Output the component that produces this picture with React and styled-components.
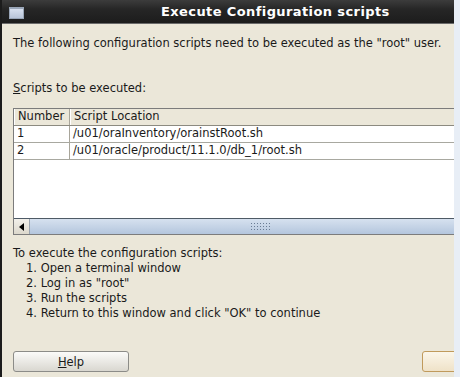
import React from 'react';
import styled, { createGlobalStyle } from 'styled-components';

const GlobalStyle = createGlobalStyle`
  html, body {
    margin: 0;
    padding: 0;
    background: #e8eef6;
  }
  body {
    font-family: "DejaVu Sans", "Liberation Sans", sans-serif;
    font-size: 11.5px;
    color: #1a1a1a;
  }
`;

const Window = styled.div`
  width: 452px;
  height: 377px;
  border-left: 2px solid #1c1c1c;
  background: #ebe7d9;
  overflow: hidden;
  display: flex;
  flex-direction: column;
`;

const TitleBar = styled.div`
  height: 23px;
  background: linear-gradient(#3c3c3c, #262626 40%, #1c1c1c);
  border-bottom: 1px solid #6a6a6a;
  display: flex;
  align-items: center;
  padding-left: 7px;
`;

const TitleIcon = styled.div`
  width: 13px;
  height: 9px;
  margin-top: 3px;
  border: 1px solid #9aa6b8;
  border-top-width: 2px;
  background: linear-gradient(#d8e0ee, #b8c4d8);
`;

const Title = styled.div`
  padding-left: 137px;
  color: #fff;
  font-weight: bold;
  font-size: 13px;
  letter-spacing: 0.4px;
  white-space: nowrap;
`;

const Body = styled.div`
  flex: 1;
  display: flex;
  flex-direction: column;
  padding: 12px 0 0 11px;
`;

const Line = styled.div`
  height: 15px;
  line-height: 15px;
  white-space: nowrap;
`;

const Label = styled(Line)`
  margin-top: 30px;
`;

const Table = styled.div`
  margin-top: 12px;
  width: 460px;
  height: 125px;
  border: 1px solid #7c7c7c;
  background: #fff;
  display: flex;
  flex-direction: column;
`;

const Row = styled.div`
  display: grid;
  grid-template-columns: 56px 1fr;
  height: 16px;
  line-height: 15px;
  background: ${p => (p.$header ? '#ebe7d9' : '#fff')};
  border-bottom: 1px solid ${p => (p.$header ? '#8c8a80' : '#a8a8a0')};
`;

const Cell = styled.div`
  padding-left: 3px;
  white-space: nowrap;
  border-right: ${p => (p.$sep ? '1px solid #a8a59a' : 'none')};
  border-left: ${p => (p.$hl ? '1px solid #fff' : 'none')};
`;

const Filler = styled.div`
  flex: 1;
`;

const ScrollBar = styled.div`
  height: 15px;
  display: flex;
  border-top: 1px solid #4e5a66;
  background: linear-gradient(#d6e1ef, #b4c6dd);
  position: relative;
`;

const ArrowButton = styled.div`
  width: 15px;
  background: linear-gradient(#f2f0ea, #dcd8cc);
  border-right: 1px solid #9aa4b0;
  display: flex;
  align-items: center;
  justify-content: center;
`;

const Grip = styled.div`
  position: absolute;
  left: 236px;
  top: 3px;
  width: 22px;
  height: 10px;
  background-image: radial-gradient(circle, #6a7c94 0.8px, transparent 1px);
  background-size: 3px 3px;
`;

const Instructions = styled.div`
  margin-top: 11px;
`;

const Step = styled(Line)`
  padding-left: 13px;
`;

const Footer = styled.div`
  margin-top: auto;
  margin-bottom: 5px;
  display: flex;
  justify-content: space-between;
`;

const Button = styled.div`
  width: ${p => p.$w}px;
  height: 19px;
  border: 1px solid ${p => (p.$default ? '#c09a5c' : '#8c8c88')};
  border-radius: 3px;
  background: ${p => (p.$default ? 'linear-gradient(#fbf6ea, #efe2c8)' : 'linear-gradient(#fbfbf9, #d9d7d0)')};
  display: flex;
  align-items: center;
  justify-content: center;
  margin-right: ${p => (p.$default ? '-20px' : '0')};
`;

const U = styled.span`
  text-decoration: underline;
`;

export default function App() {
  return (
    <>
      <GlobalStyle />
      <Window>
        <TitleBar>
          <TitleIcon />
          <Title>Execute Configuration scripts</Title>
        </TitleBar>
        <Body>
          <Line>The following configuration scripts need to be executed as the "root" user.</Line>
          <Label><U>S</U>cripts to be executed:</Label>
          <Table>
            <Row $header>
              <Cell $sep $hl>Number</Cell>
              <Cell $hl>Script Location</Cell>
            </Row>
            <Row>
              <Cell $sep>1</Cell>
              <Cell>/u01/oraInventory/orainstRoot.sh</Cell>
            </Row>
            <Row>
              <Cell $sep>2</Cell>
              <Cell>/u01/oracle/product/11.1.0/db_1/root.sh</Cell>
            </Row>
            <Filler />
            <ScrollBar>
              <ArrowButton>
                <svg width="5" height="8" viewBox="0 0 5 8">
                  <path d="M5 0 L0 4 L5 8 Z" fill="#000" />
                </svg>
              </ArrowButton>
              <Grip />
            </ScrollBar>
          </Table>
          <Instructions>
            <Line>To execute the configuration scripts:</Line>
            <Step>1. Open a terminal window</Step>
            <Step>2. Log in as "root"</Step>
            <Step>3. Run the scripts</Step>
            <Step>4. Return to this window and click "OK" to continue</Step>
          </Instructions>
          <Footer>
            <Button $w={114}><span><U>H</U>elp</span></Button>
            <Button $w={50} $default />
          </Footer>
        </Body>
      </Window>
    </>
  );
}
